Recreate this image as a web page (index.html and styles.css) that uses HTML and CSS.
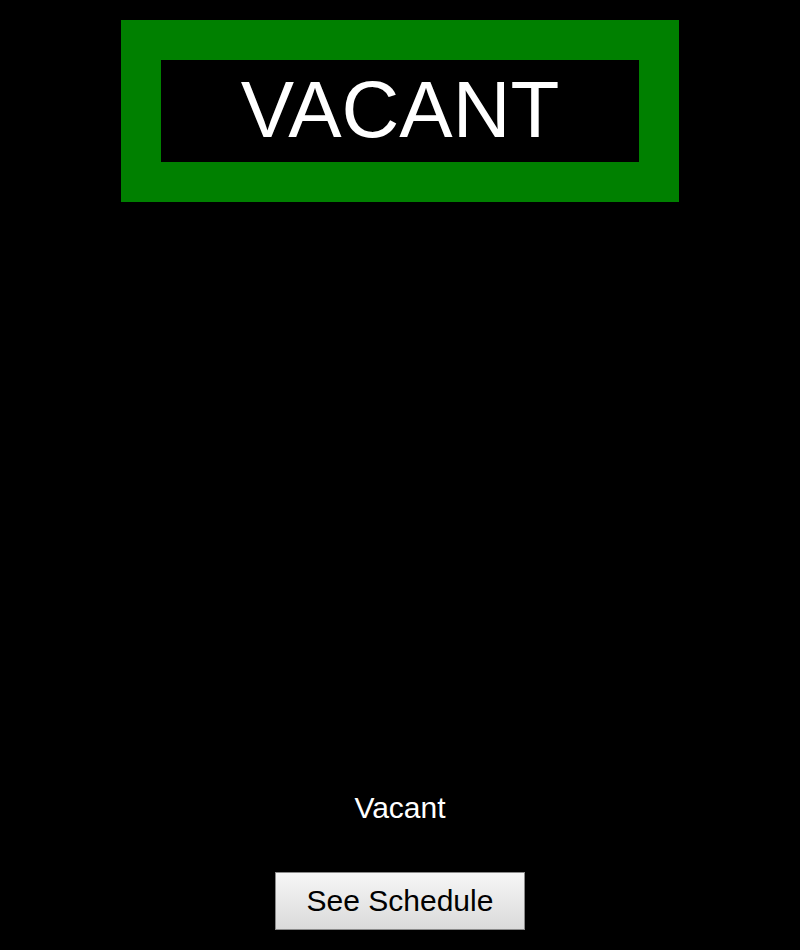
FILE: index.html
```html
<!DOCTYPE html>
<html>
<head>
<meta charset="utf-8">
<link rel="stylesheet" href="styles.css">
</head>
<body>
<div class="page">
  <div class="status-frame">
    <div class="status-inner">VACANT</div>
  </div>
  <div class="status-label">Vacant</div>
  <button class="schedule-btn">See Schedule</button>
</div>
</body>
</html>
```
FILE: styles.css
```css
html, body {
  margin: 0;
  padding: 0;
  background: #000;
  height: 100%;
}
.page {
  display: flex;
  flex-direction: column;
  align-items: center;
  padding-top: 20px;
  font-family: "Liberation Sans", Arial, sans-serif;
}
.status-frame {
  width: 478px;
  height: 102px;
  border: 40px solid #008000;
  background: #000;
}
.status-inner {
  height: 102px;
  line-height: 100px;
  text-align: center;
  color: #fff;
  font-size: 80px;
}
.status-label {
  margin-top: 589px;
  height: 34px;
  line-height: 34px;
  color: #fff;
  font-size: 30px;
}
.schedule-btn {
  margin-top: 47px;
  width: 250px;
  height: 58px;
  box-sizing: border-box;
  border: 1px solid #8a8a8a;
  background: linear-gradient(#f6f6f6, #dadada);
  font-family: "Liberation Sans", Arial, sans-serif;
  font-size: 30px;
  color: #000;
  padding: 0;
}
```
